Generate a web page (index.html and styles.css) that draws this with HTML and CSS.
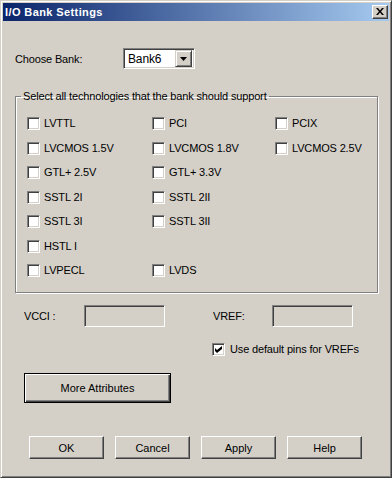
FILE: index.html
```html
<!DOCTYPE html>
<html lang="en">
<head>
    <meta charset="UTF-8" />
    <title>I/O Bank Settings</title>
    <link rel="stylesheet" href="styles.css">
</head>
<body>
    <div class="window">
        <div class="titlebar">
            <span class="title">I/O Bank Settings</span>
            <span class="close">
                <svg width="8" height="7" viewBox="0 0 8 7"><path d="M0 0h2l2 2.5 2-2.5h2l-3 3.5 3 3.5h-2l-2-2.5-2 2.5h-2l3-3.5z" fill="#000"/></svg>
            </span>
        </div>
        <div class="content">
            <div class="bank-row">
                <span class="bank-label">Choose Bank:</span>
                <div class="combo">
                    <span class="combo-value">Bank6</span>
                    <span class="combo-btn">
                        <svg width="7" height="4" viewBox="0 0 7 4"><path d="M0 0h7l-3.5 4z" fill="#000"/></svg>
                    </span>
                </div>
            </div>

            <fieldset class="group">
                <legend>Select all technologies that the bank should support</legend>
                <div class="tech-grid">
                    <label class="check"><span class="box"></span>LVTTL</label>
                    <label class="check"><span class="box"></span>PCI</label>
                    <label class="check"><span class="box"></span>PCIX</label>
                    <label class="check"><span class="box"></span>LVCMOS 1.5V</label>
                    <label class="check"><span class="box"></span>LVCMOS 1.8V</label>
                    <label class="check"><span class="box"></span>LVCMOS 2.5V</label>
                    <label class="check"><span class="box"></span>GTL+ 2.5V</label>
                    <label class="check"><span class="box"></span>GTL+ 3.3V</label>
                    <label class="check row-start"><span class="box"></span>SSTL 2I</label>
                    <label class="check"><span class="box"></span>SSTL 2II</label>
                    <label class="check row-start"><span class="box"></span>SSTL 3I</label>
                    <label class="check"><span class="box"></span>SSTL 3II</label>
                    <label class="check row-start"><span class="box"></span>HSTL I</label>
                    <label class="check row-start"><span class="box"></span>LVPECL</label>
                    <label class="check"><span class="box"></span>LVDS</label>
                </div>
            </fieldset>

            <div class="volt-row">
                <span class="volt-label">VCCI :</span>
                <span class="field"></span>
                <span class="volt-label vref">VREF:</span>
                <span class="field"></span>
            </div>

            <label class="check default-pins">
                <span class="box checked">
                    <svg width="7" height="7" viewBox="0 0 7 7"><path d="M0 2l2 2 5-4v3l-5 4-2-2z" fill="#000"/></svg>
                </span>Use default pins for VREFs
            </label>

            <button class="btn more">More Attributes</button>

            <div class="actions">
                <button class="btn">OK</button>
                <button class="btn">Cancel</button>
                <button class="btn">Apply</button>
                <button class="btn">Help</button>
            </div>
        </div>
    </div>
</body>
</html>
```

FILE: styles.css
```css
body {
    margin: 0;
    background-color: #d4d0c8;
}
.window {
    width: 392px;
    height: 478px;
    box-sizing: border-box;
    background-color: #d4d0c8;
    border: 1px solid;
    border-color: #d4d0c8 #404040 #404040 #d4d0c8;
    box-shadow: inset 1px 1px 0 #fff, inset -1px -1px 0 #808080;
    padding: 2px;
    display: flex;
    flex-direction: column;
    font-family: "Liberation Sans", Arial, sans-serif;
    font-size: 11px;
    color: #000;
}

/* Title bar */
.titlebar {
    height: 18px;
    background: linear-gradient(to right, #0a246a, #a6caf0);
    display: flex;
    align-items: center;
    justify-content: space-between;
    padding: 0 1px 0 2px;
}
.title {
    color: #fff;
    font-weight: 700;
    letter-spacing: 0.4px;
}
.close {
    width: 16px;
    height: 14px;
    box-sizing: border-box;
    background-color: #d4d0c8;
    border: 1px solid;
    border-color: #fff #404040 #404040 #fff;
    box-shadow: inset -1px -1px 0 #808080;
    display: flex;
    align-items: center;
    justify-content: center;
    padding: 0 1px 1px 0;
}

.content {
    flex: 1;
    padding: 27px 11px 0 12px;
    display: flex;
    flex-direction: column;
    align-items: flex-start;
    letter-spacing: -0.15px;
}

/* Bank chooser */
.bank-row {
    display: flex;
    align-items: center;
    height: 21px;
}
.bank-label {
    width: 108px;
}
.combo {
    width: 72px;
    height: 21px;
    box-sizing: border-box;
    background: #fff;
    border: 1px solid;
    border-color: #808080 #fff #fff #808080;
    box-shadow: inset 1px 1px 0 #404040, inset -1px -1px 0 #d4d0c8;
    display: flex;
    align-items: center;
    padding: 2px;
}
.combo-value {
    flex: 1;
    padding-left: 2px;
    font-size: 12px;
}
.combo-btn {
    width: 17px;
    height: 17px;
    box-sizing: border-box;
    background-color: #d4d0c8;
    border: 1px solid;
    border-color: #d4d0c8 #404040 #404040 #d4d0c8;
    box-shadow: inset 1px 1px 0 #fff, inset -1px -1px 0 #808080;
    display: flex;
    align-items: center;
    justify-content: center;
}

/* Group box */
.group {
    margin: 21px 0 0 0;
    width: 363px;
    box-sizing: border-box;
    border: 1px solid #808080;
    box-shadow: inset 1px 1px 0 #fff, 1px 1px 0 #fff;
    padding: 14px 0 15px 11px;
}
.group legend {
    line-height: 13px;
    padding: 0 2px;
    margin-left: -6px;
}
.tech-grid {
    display: grid;
    grid-template-columns: 125px 123px auto;
    grid-auto-rows: 13px;
    row-gap: 11.5px;
}
.row-start {
    grid-column: 1;
}

.check {
    display: flex;
    align-items: center;
    gap: 4px;
    line-height: 13px;
}
.box {
    width: 13px;
    height: 13px;
    box-sizing: border-box;
    background: #fff;
    border: 1px solid;
    border-color: #808080 #fff #fff #808080;
    box-shadow: inset 1px 1px 0 #404040, inset -1px -1px 0 #d4d0c8;
    display: flex;
    align-items: center;
    justify-content: center;
}

/* Voltage fields */
.volt-row {
    display: flex;
    align-items: center;
    margin: 12px 0 0 9px;
}
.volt-label {
    width: 60px;
}
.volt-label.vref {
    margin-left: 48px;
    width: 59px;
}
.field {
    width: 81px;
    height: 22px;
    box-sizing: border-box;
    border: 1px solid;
    border-color: #808080 #fff #fff #808080;
    box-shadow: inset 1px 1px 0 #404040, inset -1px -1px 0 #d4d0c8;
}

.default-pins {
    margin: 16px 0 0 197px;
    gap: 5px;
}

/* Buttons */
.btn {
    width: 75px;
    height: 23px;
    background-color: #d4d0c8;
    border: 1px solid;
    border-color: #fff #404040 #404040 #fff;
    box-shadow: inset -1px -1px 0 #808080;
    font-family: inherit;
    font-size: 11px;
    color: #000;
    padding: 0;
}
.btn.more {
    width: 147px;
    height: 30px;
    margin: 17px 0 0 9px;
    border: 1px solid #000;
    box-shadow: inset 1px 1px 0 #fff, inset -1px -1px 0 #404040, inset -2px -2px 0 #808080;
}
.actions {
    display: flex;
    gap: 11px;
    margin: 33px 0 0 14px;
}
```
